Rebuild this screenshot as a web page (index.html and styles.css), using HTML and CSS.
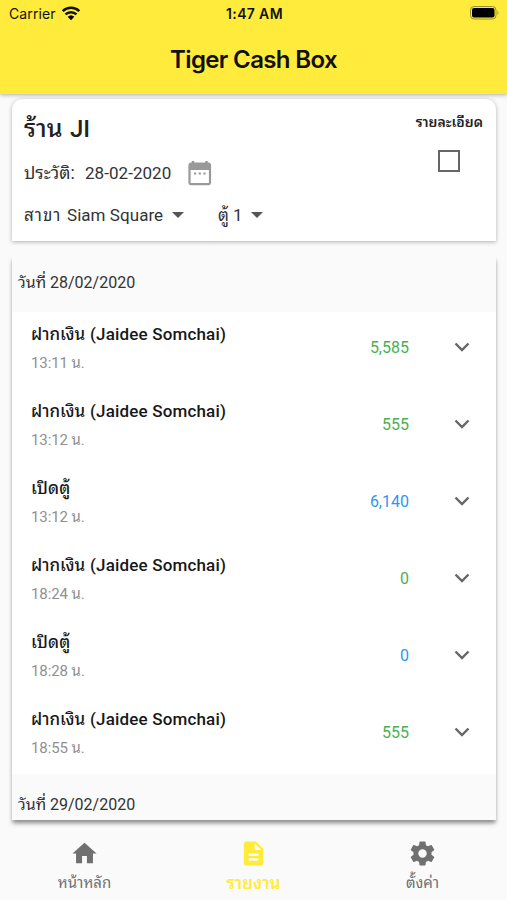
FILE: index.html
```html
<!DOCTYPE html>
<html lang="th">
<head>
<meta charset="utf-8">
<title>Tiger Cash Box</title>
<link rel="stylesheet" href="styles.css">
</head>
<body>
<div class="app">
  <header class="appbar">
    <div class="status">
      <div class="carrier"><span>Carrier</span>
        <svg width="20" height="15" viewBox="0 0 20 15"><path d="M1.700 5.200a12 12 0 0 1 16.600 0M4.500 8.400a8 8 0 0 1 11 0" fill="none" stroke="#111" stroke-width="2.500"/><path d="M6.700 10.800a4.800 4.800 0 0 1 6.600 0L10 14.200z"/></svg>
      </div>
      <div class="clock">1:47 AM</div>
      <svg class="battery" width="30" height="14" viewBox="0 0 30 14"><rect x=".5" y=".5" width="25.500" height="12.500" rx="3.500" fill="none" stroke="#9c9027"/><rect x="2" y="2" width="22.500" height="9.500" rx="2"/><path d="M27.500 4.500v4.500q2-2.200 0-4.500" fill="#9c9027"/></svg>
    </div>
    <h1>Tiger Cash Box</h1>
  </header>

  <main>
    <section class="filter">
      <div class="filter-main">
        <h2><span class="th shop">ร้าน</span><span>JI</span></h2>
        <div class="history"><span class="th label">ประวัติ:</span><span class="date">28-02-2020</span>
          <svg width="24" height="26" viewBox="0 0 24 26"><path d="M5 1v4M18.500 1v4" stroke="#999" stroke-width="2.500"/><rect x="1.500" y="3.700" width="20.500" height="20.500" rx="2" fill="#fff" stroke="#999" stroke-width="2.200"/><path d="M1 4h22v6H1z" fill="#999"/><path d="M6 13.500h2.200M10.700 13.500h2.200M15.400 13.500h2.200" stroke="#999" stroke-width="2"/></svg>
        </div>
        <div class="selects"><span class="th branch">สาขา</span><span class="branch-name">Siam Square</span><i class="caret"></i><span class="box"><span class="th">ตู้</span> 1</span><i class="caret"></i></div>
      </div>
      <div class="detail"><span class="th">รายละเอียด</span><i class="check"></i></div>
    </section>

    <section class="list">
      <div class="day first"><span class="th">วันที่</span><span>28/02/2020</span></div>
      <div class="row"><div class="info"><b><span class="th dep">ฝากเงิน</span>(Jaidee Somchai)</b><small>13:11 <span class="th">น.</span></small></div><span class="amount in">5,585</span><svg class="chev" viewBox="0 0 16 10"><path d="M1.500 1.500 8 8l6.500-6.500"/></svg></div>
      <div class="row"><div class="info"><b><span class="th dep">ฝากเงิน</span>(Jaidee Somchai)</b><small>13:12 <span class="th">น.</span></small></div><span class="amount in">555</span><svg class="chev" viewBox="0 0 16 10"><path d="M1.500 1.500 8 8l6.500-6.500"/></svg></div>
      <div class="row"><div class="info"><b><span class="th">เปิดตู้</span></b><small>13:12 <span class="th">น.</span></small></div><span class="amount open">6,140</span><svg class="chev" viewBox="0 0 16 10"><path d="M1.500 1.500 8 8l6.500-6.500"/></svg></div>
      <div class="row"><div class="info"><b><span class="th dep">ฝากเงิน</span>(Jaidee Somchai)</b><small>18:24 <span class="th">น.</span></small></div><span class="amount in">0</span><svg class="chev" viewBox="0 0 16 10"><path d="M1.500 1.500 8 8l6.500-6.500"/></svg></div>
      <div class="row"><div class="info"><b><span class="th">เปิดตู้</span></b><small>18:28 <span class="th">น.</span></small></div><span class="amount open">0</span><svg class="chev" viewBox="0 0 16 10"><path d="M1.500 1.500 8 8l6.500-6.500"/></svg></div>
      <div class="row"><div class="info"><b><span class="th dep">ฝากเงิน</span>(Jaidee Somchai)</b><small>18:55 <span class="th">น.</span></small></div><span class="amount in">555</span><svg class="chev" viewBox="0 0 16 10"><path d="M1.500 1.500 8 8l6.500-6.500"/></svg></div>
      <div class="day"><span class="th">วันที่</span><span>29/02/2020</span></div>
    </section>
  </main>

  <nav class="tabs">
    <a><svg width="29" height="29" viewBox="0 0 24 24"><path d="M10 20v-6h4v6h5v-8h3L12 3 2 12h3v8z"/></svg><span class="th">หน้าหลัก</span></a>
    <a class="active"><svg width="29" height="29" viewBox="0 0 24 24"><path d="M14 2H6c-1.100 0-2 .9-2 2v16c0 1.100.9 2 2 2h12c1.100 0 2-.9 2-2V8l-6-6zm2 16H8v-2h8v2zm0-4H8v-2h8v2zm-3-5V3.500L18.500 9H13z"/></svg><span class="th">รายงาน</span></a>
    <a><svg width="29" height="29" viewBox="0 0 24 24"><path d="M19.430 12.980c.04-.32.07-.64.07-.98s-.03-.66-.07-.98l2.110-1.650c.19-.15.24-.42.12-.64l-2-3.460c-.12-.22-.39-.3-.61-.22l-2.490 1c-.52-.4-1.080-.73-1.690-.98l-.38-2.650C14.460 2.180 14.250 2 14 2h-4c-.25 0-.46.18-.49.42l-.38 2.650c-.61.25-1.170.59-1.690.98l-2.490-1c-.23-.09-.49 0-.61.22l-2 3.460c-.13.22-.07.49.12.64l2.110 1.650c-.04.32-.07.65-.07.98s.03.66.07.98l-2.110 1.650c-.19.15-.24.42-.12.64l2 3.460c.12.22.39.3.61.22l2.490-1c.52.4 1.080.73 1.690.98l.38 2.650c.03.24.24.42.49.42h4c.25 0 .46-.18.49-.42l.38-2.650c.61-.25 1.170-.59 1.690-.98l2.490 1c.23.09.49 0 .61-.22l2-3.460c.12-.22.07-.49-.12-.64l-2.110-1.650zM12 15.500a3.500 3.500 0 1 1 0-7 3.500 3.500 0 0 1 0 7z"/></svg><span class="th">ตั้งค่า</span></a>
  </nav>
</div>
</body>
</html>
```
FILE: styles.css
```css
* { box-sizing: border-box; }
body { margin: 0; background: #fafafa; color: #333; font-family: Roboto, "Noto Sans Thai Looped", "Noto Looped Thai", Loma, Garuda, Waree, sans-serif; }
.app { width: 507px; height: 900px; display: flex; flex-direction: column; overflow: hidden; }
svg { display: block; flex: none; }
h1, h2 { margin: 0; }
span { white-space: nowrap; }
.th { display: inline-block; }

.appbar { height: 94px; flex: none; background: #ffeb3b; box-shadow: 0 1px 4px rgba(0,0,0,.3); color: #111; font-family: Inter, sans-serif; }
.status { height: 27px; display: grid; grid-template-columns: 1fr auto 1fr; align-items: center; padding: 0 7px 0 9px; font-size: 14px; line-height: 27px; }
.carrier { display: flex; align-items: center; gap: 5px; letter-spacing: .1px; }
.carrier svg { margin-top: -1px; }
.clock { font-weight: 600; font-size: 14px; letter-spacing: .35px; }
.battery { justify-self: end; margin-top: -1px; }
h1 { font-size: 24px; line-height: 66px; font-weight: 600; text-align: center; letter-spacing: -.65px; }

main { flex: none; height: 736px; padding: 5px 11px 0 12px; }
.filter { height: 142px; display: flex; justify-content: space-between; background: #fff; border-radius: 10px 10px 0 0; box-shadow: 0 1px 4px rgba(0,0,0,.3); padding: 0 13px 0 12px; }
h2 { display: flex; height: 60px; align-items: center; font-size: 24px; font-weight: 500; line-height: 62px; color: #222; }
.shop { width: 46px; font-size: 25px; }
.history { display: flex; height: 28px; align-items: center; font-size: 17px; line-height: 28px; }
.label { width: 61px; font-size: 17.6px; }
.date { width: 103px; letter-spacing: .05px; }
.selects { display: flex; height: 56px; align-items: center; font-size: 17px; line-height: 56px; }
.branch { width: 43px; letter-spacing: 1px; }
.branch-name { width: 105px; letter-spacing: .05px; }
.caret { border: 6px solid transparent; border-top-color: #555; border-bottom: 0; }
.box { margin: 0 9px 0 34px; width: 24px; }
.detail { display: flex; flex-direction: column; align-items: flex-end; font-size: 14px; font-weight: 600; color: #222; line-height: 46px; }
.check { width: 22px; height: 22px; margin: 5px 23px 0 0; border: 2px solid #666; }

.list { margin-top: 15px; height: 564px; overflow: hidden; background: #fff; box-shadow: 0 4px 5px -1px rgba(0,0,0,.35), 0 3px 3px rgba(0,0,0,.15); }
.day { height: 61px; padding-left: 6px; display: flex; align-items: center; gap: 5px; background: #fafafa; font-size: 16px; line-height: 61px; }
.day.first { height: 56px; line-height: 54px; align-items: flex-start; }
.day .th { width: 27px; }
.row { height: 77px; display: flex; align-items: center; padding: 0 27px 0 19px; }
.info { flex: 1; height: 77px; padding-top: 8px; }
b, small { display: block; white-space: nowrap; }
b { height: 28px; line-height: 28px; font-size: 17px; letter-spacing: .17px; font-weight: 500; color: #181818; }
.dep { width: 59px; letter-spacing: 0; }
small { height: 30px; line-height: 30px; font-size: 15px; letter-spacing: -.1px; color: #909090; }
.amount { font-size: 16px; line-height: 20px; margin: -6px 44px 0 0; }
.in { color: #4caf50; }
.open { color: #2f96f0; }
.chev { width: 16px; height: 10px; margin: -7px -1px 0 1px; fill: none; stroke: #666; stroke-width: 2.4; }

.tabs { flex: 1; display: grid; grid-template-columns: repeat(3, 1fr); padding-top: 9px; }
.tabs a { display: flex; flex-direction: column; align-items: center; color: #707070; font-size: 15px; line-height: 30px; }
.tabs svg { fill: currentColor; }
.tabs .active { color: #ffeb3b; font-weight: 600; font-size: 17px; }
```
